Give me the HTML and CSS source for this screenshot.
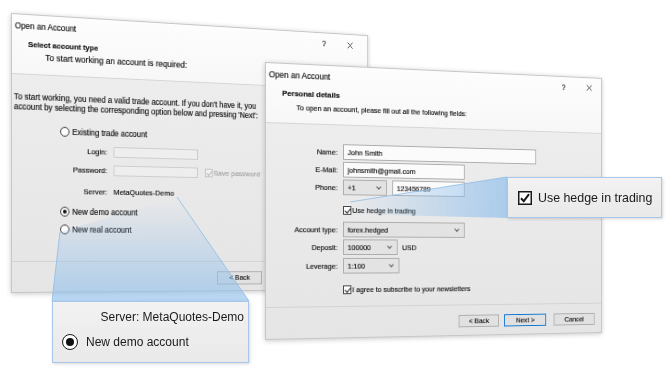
FILE: index.html
```html
<!DOCTYPE html>
<html lang="en">
<head>
  <meta charset="UTF-8" />
  <title>Open an Account</title>
  <link rel="stylesheet" href="styles.css">
</head>
<body>
  <div class="desk">

    <!-- Step 1: account type -->
    <section class="win win-type">
      <header class="win-head">
        <div class="titlebar">
          <span class="title">Open an Account</span>
          <span class="help">?</span>
          <svg class="close" viewBox="0 0 8 8"><path d="M0.5 0.5 L7.5 7.5 M7.5 0.5 L0.5 7.5" /></svg>
        </div>
        <div class="heading">Select account type</div>
        <div class="sub">To start working an account is required:</div>
      </header>
      <div class="win-body">
        <div class="intro">
          <span>To start working, you need a valid trade account. If you don't have it, you</span>
          <span>account by selecting the corresponding option below and pressing 'Next':</span>
        </div>
        <div class="opt opt-existing"><span class="radio"></span>Existing trade account</div>
        <div class="cred cred-login"><span class="lbl">Login:</span><span class="field off"></span></div>
        <div class="cred cred-pass"><span class="lbl">Password:</span><span class="field off"></span><span class="check off"><span class="box"></span>Save password</span></div>
        <div class="cred cred-server"><span class="lbl">Server:</span><span>MetaQuotes-Demo</span></div>
        <div class="opt opt-demo"><span class="radio on"></span>New demo account</div>
        <div class="opt opt-real"><span class="radio"></span>New real account</div>
      </div>
      <footer class="win-foot">
        <button class="btn">&lt; Back</button>
        <button class="btn btn-next">Next &gt;</button>
        <button class="btn btn-cancel">Cancel</button>
      </footer>
    </section>

    <!-- Step 2: personal details -->
    <section class="win win-details">
      <header class="win-head">
        <div class="titlebar">
          <span class="title">Open an Account</span>
          <span class="help">?</span>
          <svg class="close" viewBox="0 0 8 8"><path d="M0.5 0.5 L7.5 7.5 M7.5 0.5 L0.5 7.5" /></svg>
        </div>
        <div class="heading">Personal details</div>
        <div class="sub">To open an account, please fill out all the following fields:</div>
      </header>
      <div class="win-body form">
        <div class="frow"><span class="lbl">Name:</span><span class="field w-name">John Smith</span></div>
        <div class="frow"><span class="lbl">E-Mail:</span><span class="field w-mail">johnsmith@gmail.com</span></div>
        <div class="frow"><span class="lbl">Phone:</span><span class="field select w-code">+1</span><span class="field w-phone">123456789</span></div>
        <div class="frow check-row row-hedge"><span class="check"><span class="box on"></span>Use hedge in trading</span></div>
        <div class="frow row-type"><span class="lbl">Account type:</span><span class="field select w-type">forex.hedged</span></div>
        <div class="frow"><span class="lbl">Deposit:</span><span class="field select w-dep">100000</span><span class="unit">USD</span></div>
        <div class="frow row-lev"><span class="lbl">Leverage:</span><span class="field select w-lev">1:100</span></div>
        <div class="frow check-row row-agree"><span class="check"><span class="box on"></span>I agree to subscribe to your newsletters</span></div>
      </div>
      <footer class="win-foot">
        <button class="btn">&lt; Back</button>
        <button class="btn btn-next">Next &gt;</button>
        <button class="btn btn-cancel">Cancel</button>
      </footer>
    </section>

    <!-- Highlight beams -->
    <svg class="beams" width="670" height="378" viewBox="0 0 670 378">
      <defs>
        <linearGradient id="beamDown" gradientUnits="userSpaceOnUse" x1="0" y1="200" x2="0" y2="301">
          <stop offset="0" stop-color="#8fbfec" stop-opacity="0" />
          <stop offset="1" stop-color="#8fbfec" stop-opacity="0.66" />
        </linearGradient>
        <linearGradient id="beamRight" gradientUnits="userSpaceOnUse" x1="350" y1="0" x2="507" y2="0">
          <stop offset="0" stop-color="#8fbfec" stop-opacity="0" />
          <stop offset="1" stop-color="#8fbfec" stop-opacity="0.7" />
        </linearGradient>
      </defs>
      <polygon points="60,232 177,197 249,301 52,301" fill="url(#beamDown)" />
      <path d="M60 232 L52 301 M177 197 L249 301" stroke="#8dbbe6" stroke-width="0.8" fill="none" />
      <polygon points="350,202 507,177 507,218 350,214" fill="url(#beamRight)" />
      <path d="M350 202 L507 177" stroke="#8dbbe6" stroke-width="0.8" fill="none" />
    </svg>

    <!-- Callouts -->
    <div class="callout callout-demo">
      <div class="callout-server">Server: MetaQuotes-Demo</div>
      <div class="callout-radio"><span class="big-radio"></span>New demo account</div>
    </div>
    <div class="callout callout-hedge">
      <svg class="big-check" viewBox="0 0 14 14"><rect x="0.75" y="0.75" width="12.5" height="12.5" /><path d="M3 7.2 L5.8 10.2 L11 3.2" /></svg>
      Use hedge in trading
    </div>

  </div>
</body>
</html>
```

FILE: styles.css
```css
body {
  margin: 0;
  background: #fff;
  font-family: "Liberation Sans", Arial, sans-serif;
  color: #0d0d0d;
}

.desk {
  position: relative;
  width: 670px;
  height: 378px;
  overflow: hidden;
}

/* Dialog windows, tilted away from the viewer */
.win {
  position: absolute;
  box-sizing: border-box;
  display: flex;
  flex-direction: column;
  overflow: hidden;
  border: 1px solid #c6c6c6;
  background: linear-gradient(#efefef, #e5e5e5);
  box-shadow: 0 1px 5px rgba(0, 0, 0, 0.22);
  white-space: nowrap;
  -webkit-text-stroke: 0.15px currentColor;
}

.win-type {
  left: 11px;
  top: 13px;
  width: 410px;
  height: 280px;
  font-size: 8px;
  transform-origin: 0 88%;
  transform: perspective(1200px) rotateY(16.85deg);
}

.win-details {
  left: 265px;
  top: 62px;
  width: 383px;
  height: 278px;
  font-size: 7.6px;
  transform-origin: 0 69.3%;
  transform: perspective(1200px) rotateY(16.46deg);
}

/* Header */
.win-head {
  flex: none;
  height: 60px;
  box-sizing: border-box;
  background: linear-gradient(#fdfdfd, #f7f7f7);
  border-bottom: 1px solid #d6d6d6;
}

.titlebar {
  display: flex;
  align-items: center;
  height: 21px;
  padding-left: 3px;
}

.title {
  flex: 1;
  font-size: 8.5px;
}

.help {
  font-size: 8.5px;
  width: 8px;
  text-align: center;
}

.close {
  width: 7px;
  height: 7px;
  stroke: #222;
  stroke-width: 1;
}

.win-type .titlebar { padding-right: 18px; }
.win-type .help { margin-right: 25px; margin-top: 1px; }
.win-type .close { margin-top: 1px; }
.win-details .titlebar { padding-right: 11px; }
.win-details .help { margin-right: 24px; }

.heading {
  font-weight: bold;
  font-size: 8px;
  line-height: 10px;
  margin-top: 4px;
  padding-left: 17px;
}

.sub {
  line-height: 10px;
}

.win-type .sub { margin-top: 2px; padding-left: 35px; font-size: 9px; }
.win-details .sub { margin-top: 4px; padding-left: 32px; font-size: 7.5px; }

/* Body */
.win-body {
  flex: 1;
  display: flex;
  flex-direction: column;
}

.intro {
  display: flex;
  flex-direction: column;
  padding: 18px 0 0 2px;
  line-height: 9.5px;
  font-size: 8.45px;
}

.opt {
  display: flex;
  align-items: center;
  gap: 3px;
  height: 12px;
  margin-left: 51px;
  font-size: 8.4px;
}

.opt-existing { margin-top: 13px; }
.opt-demo { margin-top: 8px; }
.opt-real { margin-top: 6.5px; }

.radio {
  width: 10px;
  height: 10px;
  box-sizing: border-box;
  border: 1px solid #333;
  border-radius: 50%;
  background: #fff;
  display: flex;
  align-items: center;
  justify-content: center;
}

.radio.on::after {
  content: "";
  width: 4px;
  height: 4px;
  border-radius: 50%;
  background: #111;
}

.cred {
  display: flex;
  align-items: center;
  height: 11.5px;
}

.cred .lbl {
  width: 102px;
  text-align: right;
  margin-right: 7px;
}

.cred .field { width: 95px; height: 11.5px; }
.cred-login { margin-top: 7.5px; }
.cred-pass { margin-top: 7.5px; }
.cred-server { margin-top: 10.5px; height: 12px; }

.field {
  box-sizing: border-box;
  height: 16px;
  display: flex;
  align-items: center;
  padding: 0 4px;
  border: 1px solid #acacac;
  background: #fbfbfb;
}

.field.off {
  border-color: #cdcdcd;
  background: #eeeeee;
}

.select {
  justify-content: space-between;
  background: #e3e3e3;
}

.select::after {
  content: "";
  width: 3px;
  height: 3px;
  margin: -2px 2px 0 0;
  border-right: 1px solid #555;
  border-bottom: 1px solid #555;
  transform: rotate(45deg);
}

.check {
  display: flex;
  align-items: center;
  gap: 1px;
}

.check .box {
  width: 9px;
  height: 9px;
  box-sizing: border-box;
  border: 1px solid #444;
  background: #fff;
  position: relative;
}

.check .box.on::after {
  content: "";
  position: absolute;
  left: 2px;
  top: 0;
  width: 2.5px;
  height: 5px;
  border-right: 1.2px solid #222;
  border-bottom: 1.2px solid #222;
  transform: rotate(40deg);
}

.check.off {
  color: #a2a2a2;
  margin-left: 8px;
}

.check.off .box {
  border-color: #c2c2c2;
  background: #f1f1f1;
}

.check.off .box::after {
  content: "";
  position: absolute;
  left: 2px;
  top: 0;
  width: 2.5px;
  height: 5px;
  border-right: 1px solid #b4b4b4;
  border-bottom: 1px solid #b4b4b4;
  transform: rotate(40deg);
}

/* Personal details form */
.form {
  padding-top: 19px;
  gap: 2px;
}

.frow {
  display: flex;
  align-items: center;
  height: 16px;
}

.frow .lbl {
  width: 76px;
  text-align: right;
  margin-right: 6px;
}

.check-row {
  height: 12px;
  padding-left: 82px;
}

.row-hedge { margin-top: 7px; }
.row-type { margin-top: 4px; }
.row-lev { margin-top: 1px; }
.row-agree { margin-top: 8px; }

.w-name { width: 220px; }
.w-mail { width: 136px; }
.w-code { width: 48px; margin-right: 6px; }
.w-phone { width: 82px; }
.w-type { width: 136px; }
.w-dep { width: 60px; }
.w-lev { width: 62px; }

.unit { margin-left: 5px; }

/* Footer buttons */
.win-foot {
  flex: none;
  display: flex;
  justify-content: flex-end;
  align-items: center;
  box-sizing: border-box;
  border-top: 1px solid #d2d2d2;
}

.btn {
  font: inherit;
  color: inherit;
  padding: 0;
  box-sizing: border-box;
  border: 1px solid #adadad;
  background: #e1e1e1;
}

.btn-next { border-color: #0a74d0; }

.win-type .win-foot { height: 31px; padding: 3px 9px 0 0; }
.win-type .btn { width: 53px; height: 14px; }
.win-type .btn-next { margin-left: 6px; }
.win-type .btn-cancel { margin-left: 8px; }

.win-details .win-foot { height: 32px; padding: 2px 8px 0 0; }
.win-details .btn { width: 50px; height: 13px; }
.win-details .btn:first-child { width: 47px; }
.win-details .btn-next { margin-left: 6px; }
.win-details .btn-cancel { margin-left: 9px; }

/* Beams and callouts */
.beams {
  position: absolute;
  left: 0;
  top: 0;
  pointer-events: none;
}

.callout {
  position: absolute;
  box-sizing: border-box;
  border: 1px solid #a7c8ea;
  background: linear-gradient(#f2f2f2, #e9e9e9);
  box-shadow: 1px 1px 3px rgba(0, 0, 0, 0.16);
  font-size: 12px;
  color: #1a1a1a;
  white-space: nowrap;
}

.callout-demo {
  left: 52px;
  top: 301px;
  width: 197px;
  height: 62px;
  padding: 8px 4px 0 9px;
}

.callout-server {
  text-align: right;
  line-height: 14px;
  font-size: 12px;
}

.callout-radio {
  display: flex;
  align-items: center;
  gap: 8px;
  height: 16px;
  margin-top: 10px;
}

.big-radio {
  width: 16px;
  height: 16px;
  box-sizing: border-box;
  border: 1.6px solid #1a1a1a;
  border-radius: 50%;
  background: #fff;
  display: flex;
  align-items: center;
  justify-content: center;
}

.big-radio::after {
  content: "";
  width: 8px;
  height: 8px;
  border-radius: 50%;
  background: #111;
}

.callout-hedge {
  left: 507px;
  top: 177px;
  width: 155px;
  height: 41px;
  display: flex;
  align-items: center;
  gap: 6px;
  padding-left: 10px;
  font-size: 12.4px;
}

.big-check {
  width: 14px;
  height: 14px;
  flex: none;
  fill: #fff;
  stroke: #1a1a1a;
}

.big-check rect { stroke-width: 1.5; }
.big-check path { fill: none; stroke-width: 2; }
```
